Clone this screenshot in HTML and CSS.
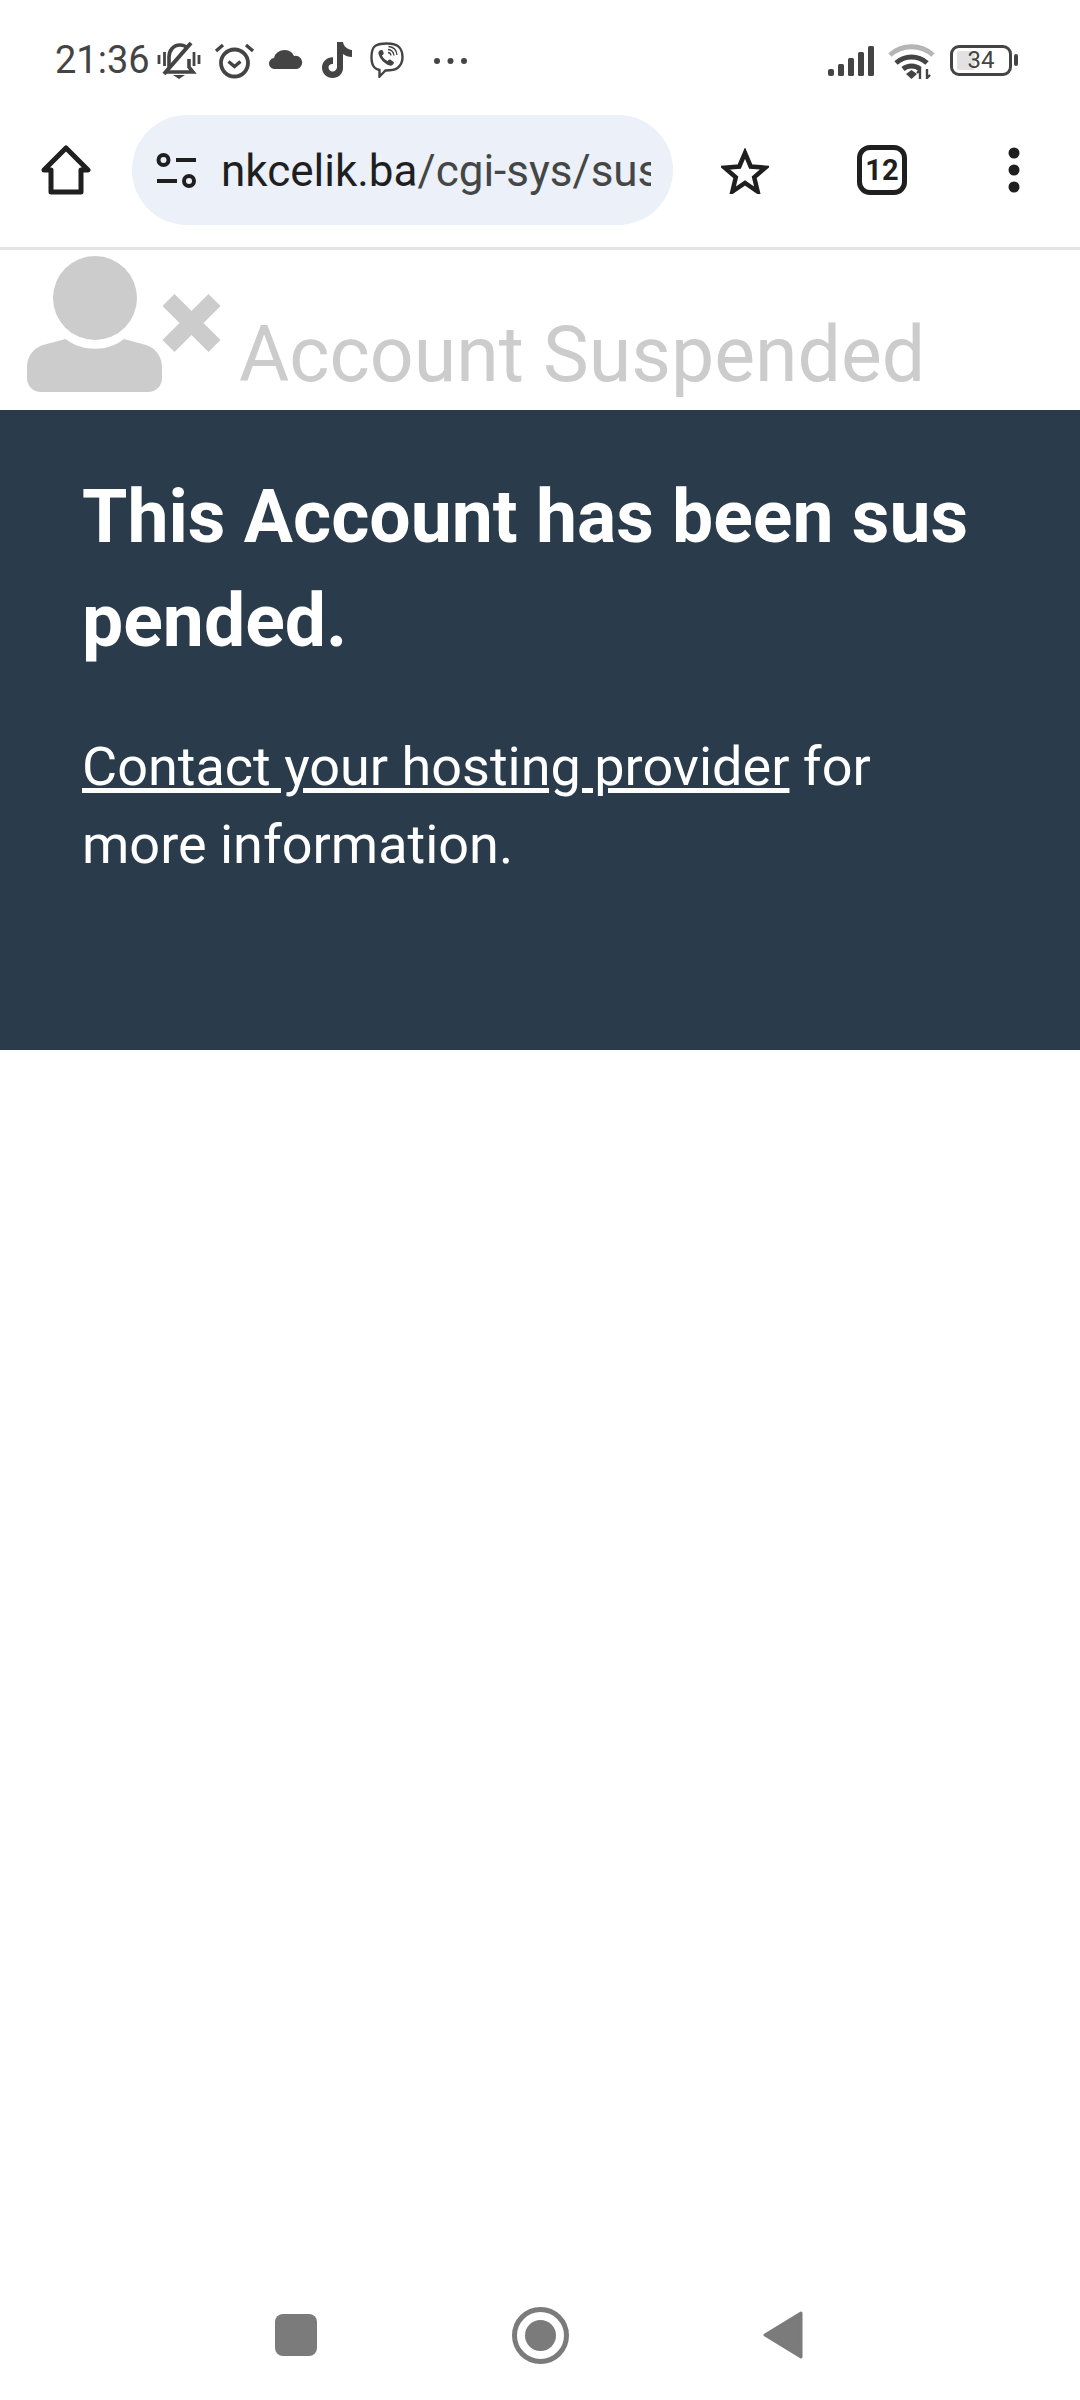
FILE: index.html
```html
<!DOCTYPE html>
<html lang="en">
<head>
  <meta charset="UTF-8" />
  <meta name="viewport" content="width=device-width, initial-scale=1" />
  <title>Account Suspended</title>
  <link rel="stylesheet" href="styles.css">
</head>
<body>
<div class="screen">

  <!-- status bar -->
  <div class="statusbar">
    <span class="time">21:36</span>
    <svg class="ic-bell" viewBox="0 0 44 37" fill="none" stroke="#444" stroke-width="3.6">
      <path d="M2 13v9M7.500 10v14M37 10v14M42 13v9" stroke-width="2.800"/>
      <path d="M12 26V15c0-6 4-12 11-12 3 0 5.500 1 7 3M32 17v8l4 5H9"/>
      <path d="M7 32 34 1" stroke-width="4"/>
      <path d="M16 33h12l-6 4z" fill="#444" stroke="none"/>
    </svg>
    <svg class="ic-alarm" viewBox="0 0 41 37" fill="none" stroke="#444" stroke-width="3.800">
      <circle cx="20.500" cy="21" r="13.500"/>
      <path d="M14.500 19.500l6 5 6-5" stroke-width="3.400"/>
      <path d="M2 9l7-6M39 9l-7-6" stroke-width="3.400"/>
    </svg>
    <svg class="ic-cloud" viewBox="0 0 34 20">
      <path d="M6 20a5.500 5.500 0 0 1-1-11A11 9 0 0 1 16 1a10 9 0 0 1 9 6 6.500 6.500 0 0 1 3 13z" fill="#444"/>
    </svg>
    <svg class="ic-tiktok" viewBox="0 0 33 36">
      <path d="M17 0h6c.5 4 4 7.500 9 8v7c-3.500 0-6.500-1-9-3v14c0 6-4.800 10-10.500 10S2 31.500 2 25.500 7 15 13 15.200v6.800c-2.500-.3-4.500 1-4.500 3.500 0 2.200 1.800 4 4 4s4.500-1.800 4.500-4.500z" fill="#444"/>
    </svg>
    <svg class="ic-viber" viewBox="0 0 34 36" fill="none" stroke="#444">
      <path d="M17 1.500c-6 0-10 .5-12.500 3S1.500 10 1.500 15s.5 8 3 10.500c1.500 1.500 3 2 5 2.500v6.500l6-6c6 0 9.500-.5 12-2.500 3-2.500 5-5.500 5-10.500s-1-8-3.500-10.500S23 1.500 17 1.500z" stroke-width="2.400"/>
      <path d="M11 8c-2 .6-3 2-2.500 4 1.500 5 5.500 9.500 11 11.500 2 .5 3.500-.5 4.300-2.300.3-.8 0-1.300-.7-1.800l-2.600-1.700c-.8-.5-1.400-.4-2 .3l-1 1c-2.500-1-4.500-3.200-5.500-5.500l1.200-1c.6-.6.7-1.100.3-1.900L12.700 8.600c-.4-.6-1-.8-1.700-.6z" fill="#444" stroke="none"/>
      <path d="M18 7.500c3.500.3 5.500 2.500 6 6M18.500 4.500c5 .3 8 3.500 8.500 8.500M18 10.500c1.800.2 2.800 1.300 3 3" stroke-width="1.300"/>
    </svg>
    <svg class="ic-more" viewBox="0 0 35 8" fill="#444">
      <circle cx="4" cy="4" r="3"/><circle cx="17.500" cy="4" r="3"/><circle cx="31" cy="4" r="3"/>
    </svg>
    <div class="status-right">
      <svg class="ic-signal" viewBox="0 0 47 30" fill="#444">
        <rect x="0" y="23" width="6" height="7" rx="2"/>
        <rect x="10" y="18" width="6" height="12" rx="1.500"/>
        <rect x="20" y="12" width="6" height="18" rx="1.500"/>
        <rect x="30" y="6" width="6" height="24" rx="1.500"/>
        <rect x="40" y="0" width="6" height="30" rx="1.500"/>
      </svg>
      <svg class="ic-wifi" viewBox="0 0 47 36" fill="none" stroke="#444" stroke-width="5">
        <path d="M2 12C14 1 33 1 45 12" stroke="#b5b5b5"/>
        <path d="M8 20c9-8 22-8 31 0"/>
        <path d="M15 26c5-4 12-4 17 0"/>
        <path d="M18 31l5.500-4 5.500 4-5.500 5z" fill="#444" stroke="none"/>
        <path d="M32 36v-9l-3 3M39 26v9l3-3" stroke-width="2.400"/>
      </svg>
      <div class="battery"><span class="battery-fill"></span><span class="battery-num">34</span></div>
      <span class="battery-nub"></span>
    </div>
  </div>

  <!-- browser toolbar -->
  <div class="toolbar">
    <svg class="ic-home" viewBox="0 0 50 50" fill="none" stroke="#1f1f1f" stroke-width="5" stroke-linejoin="round">
      <path d="M3 25 25 3l22 22h-7v22H10V25z"/>
    </svg>
    <div class="urlbar">
      <svg class="ic-tune" viewBox="0 0 41 35" fill="none" stroke="#1f1f1f" stroke-width="4">
        <circle cx="7.500" cy="7" r="5"/>
        <path d="M20 7h20M1 28h20"/>
        <circle cx="33" cy="28" r="5"/>
      </svg>
      <div class="url"><span class="domain">nkcelik.ba</span>/cgi-sys/suspendedpage.cgi</div>
    </div>
    <svg class="ic-star" viewBox="0 0 48 46" fill="none" stroke="#1f1f1f" stroke-width="4.500">
      <path d="M24 5l5.700 13.500 14.600 1.200-11.100 9.600 3.400 14.200L24 35l-12.600 8.500 3.400-14.200L3.700 19.700l14.600-1.200z"/>
    </svg>
    <div class="tabs">12</div>
    <svg class="ic-menu" viewBox="0 0 12 46" fill="#1f1f1f">
      <circle cx="6" cy="6" r="5.500"/><circle cx="6" cy="23" r="5.500"/><circle cx="6" cy="40" r="5.500"/>
    </svg>
  </div>

  <!-- suspended page -->
  <div class="page-head">
    <svg class="ic-user" viewBox="0 0 195 137">
      <circle cx="68" cy="43" r="42" fill="#ccc"/>
      <path d="M38.500 84C55 97 81 97 97 84l22 6c10 3 16 12 16 22v11c0 8-6 14-14 14H14C6 137 0 131 0 123v-11c0-10 6-19 16-22z" fill="#ccc"/>
      <path d="M141.500 45l46 46M187.500 45l-46 46" stroke="#ccc" stroke-width="17"/>
    </svg>
    <h1>Account Suspended</h1>
  </div>

  <div class="notice">
    <h2>This Account has been suspended.</h2>
    <p><a href="#">Contact your hosting provider</a> for more information.</p>
  </div>

  <!-- nav buttons -->
  <div class="navbar">
    <span class="nav-square"></span>
    <span class="nav-home"><span></span></span>
    <svg class="nav-back" viewBox="0 0 40 48" fill="#7b7b7b" stroke="#7b7b7b" stroke-width="3" stroke-linejoin="round">
      <path d="M38 2v44L2 24z"/>
    </svg>
  </div>

</div>
</body>
</html>
```

FILE: styles.css
```css
body {
  margin: 0;
  background: #fff;
  font-family: 'Roboto', 'Liberation Sans', sans-serif;
}
svg {
  display: block;
  flex: none;
}
.screen {
  height: 2400px;
  display: flex;
  flex-direction: column;
  overflow: hidden;
}

/* status bar */
.statusbar {
  height: 115px;
  box-sizing: border-box;
  padding: 42px 0 0 55px;
  display: flex;
  align-items: flex-start;
}
.time {
  width: 93px;
  font-size: 38px;
  line-height: 37px;
  color: #444;
}
.ic-bell { width: 44px; height: 37px; margin-left: 9px; }
.ic-alarm { width: 41px; height: 37px; margin-left: 13px; }
.ic-cloud { width: 34px; height: 20px; margin: 7px 0 0 14px; }
.ic-tiktok { width: 33px; height: 36px; margin-left: 17px; }
.ic-viber { width: 34px; height: 36px; margin-left: 17px; }
.ic-more { width: 35px; height: 8px; margin: 15px 0 0 29px; }
.status-right {
  margin-left: auto;
  margin-right: 62px;
  display: flex;
  align-items: flex-start;
}
.ic-signal { width: 47px; height: 30px; margin-top: 4px; }
.ic-wifi { width: 47px; height: 36px; margin: 1px 0 0 13px; }
.battery {
  position: relative;
  width: 62px;
  height: 31px;
  box-sizing: border-box;
  margin: 3px 0 0 15px;
  border: 3px solid #444;
  border-radius: 9px;
  text-align: center;
  font-size: 24px;
  line-height: 25px;
  color: #444;
}
.battery-fill {
  position: absolute;
  left: 4px;
  top: 3px;
  bottom: 3px;
  width: 18px;
  background: #e2e2e2;
  border-radius: 2px;
}
.battery-num {
  position: relative;
}
.battery-nub {
  width: 4px;
  height: 12px;
  margin: 12px 0 0 2px;
  background: #444;
  border-radius: 2px;
}

/* toolbar */
.toolbar {
  height: 135px;
  box-sizing: border-box;
  border-bottom: 3px solid #e3e3e3;
  display: flex;
  align-items: flex-start;
}
.ic-home { width: 50px; height: 50px; margin: 30px 0 0 41px; }
.urlbar {
  width: 541px;
  height: 110px;
  box-sizing: border-box;
  margin-left: 41px;
  padding: 0 22px 0 24px;
  background: #ebf0f9;
  border-radius: 55px;
  display: flex;
  align-items: center;
}
.ic-tune { width: 41px; height: 35px; margin-top: 1px; }
.url {
  margin: 2px 0 0 24px;
  overflow: hidden;
  white-space: nowrap;
  font-size: 44px;
  color: #444746;
}
.domain {
  color: #1f1f1f;
}
.ic-star { width: 48px; height: 46px; margin: 33px 0 0 48px; }
.tabs {
  width: 50px;
  height: 50px;
  box-sizing: border-box;
  margin: 30px 0 0 88px;
  border: 5px solid #1f1f1f;
  border-radius: 13px;
  text-align: center;
  font-size: 29px;
  font-weight: 700;
  line-height: 40px;
  color: #1f1f1f;
}
.ic-menu { width: 12px; height: 46px; margin: 32px 0 0 101px; }

/* page */
.page-head {
  height: 160px;
  box-sizing: border-box;
  padding: 5px 0 0 27px;
  display: flex;
  align-items: flex-start;
}
.ic-user { width: 195px; height: 137px; }
.page-head h1 {
  margin: 55px 0 0 17px;
  font-size: 77px;
  font-weight: 400;
  line-height: 90px;
  color: #ccc;
}
.notice {
  height: 640px;
  box-sizing: border-box;
  padding: 55px 83px 0 82px;
  background: #2a3b4b;
  color: #fff;
}
.notice h2 {
  margin: 0 0 55px;
  font-size: 73.3px;
  font-weight: 700;
  line-height: 104px;
  word-break: break-all;
}
.notice p {
  margin: 0;
  font-size: 54px;
  line-height: 78px;
}
.notice a {
  color: #fff;
}

/* nav */
.navbar {
  margin-top: auto;
  height: 94px;
  margin-bottom: 18px;
  padding-left: 275px;
  display: flex;
  align-items: center;
}
.nav-square {
  width: 42px;
  height: 42px;
  background: #7b7b7b;
  border-radius: 8px;
}
.nav-home {
  width: 57px;
  height: 57px;
  box-sizing: border-box;
  margin-left: 195px;
  border: 5px solid #7b7b7b;
  border-radius: 50%;
  display: flex;
  align-items: center;
  justify-content: center;
}
.nav-home span {
  width: 31px;
  height: 31px;
  background: #7b7b7b;
  border-radius: 50%;
}
.nav-back { width: 40px; height: 48px; margin-left: 194px; }
```
